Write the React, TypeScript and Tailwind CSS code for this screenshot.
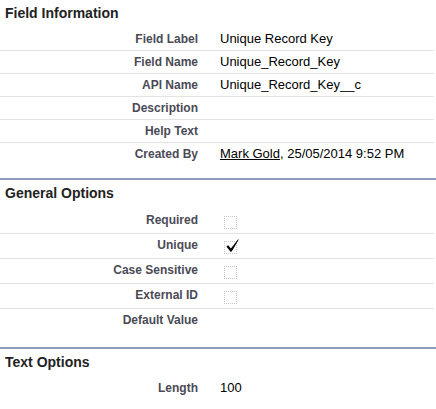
import React from "react";

const font = { fontFamily: '"Liberation Sans", Arial, sans-serif' };

function Row({
  label,
  children,
  border = true,
  tall = false,
}: {
  label: string;
  children?: React.ReactNode;
  border?: boolean;
  tall?: boolean;
}) {
  return (
    <div
      className={`flex mr-[2px] ${tall ? "h-[25px]" : "h-[23px]"} ${
        border ? "border-b border-[#e3e3e3]" : ""
      }`}
    >
      <div className="w-[198px] shrink-0 text-right text-[12px] font-bold text-[#4a4a56] leading-[22px]">
        {label}
      </div>
      <div className="pl-[22px] text-[13px] text-black leading-[22px]">
        {children}
      </div>
    </div>
  );
}

function Checkbox({ checked = false }: { checked?: boolean }) {
  return (
    <div className="relative ml-[4px] mt-[7px] w-[13px] h-[13px] border border-dotted border-[#c4c4c4]">
      {checked && (
        <svg
          className="absolute left-[1px] top-[-3px]"
          width="13"
          height="13"
          viewBox="0 0 13 13"
        >
          <path
            d="M0.4 7.4 L2.1 6.3 L4.9 9.4 L12.1 0.2 L12.7 0.7 L5.5 12.7 L4.5 12.7 Z"
            fill="#000"
          />
        </svg>
      )}
    </div>
  );
}

function Header({ title, tall = false }: { title: string; tall?: boolean }) {
  return (
    <div
      className={`${
        tall ? "h-[29px]" : "h-[28px]"
      } pt-[4px] pl-[5px] text-[14px] font-bold leading-[18px] text-[#222]`}
    >
      {title}
    </div>
  );
}

export default function App() {
  return (
    <div className="w-[436px] h-[409px] bg-white overflow-hidden" style={font}>
      <section className="mb-[12px]">
        <Header title="Field Information" />
        <Row label="Field Label">Unique Record Key</Row>
        <Row label="Field Name">Unique_Record_Key</Row>
        <Row label="API Name">Unique_Record_Key__c</Row>
        <Row label="Description"></Row>
        <Row label="Help Text"></Row>
        <Row label="Created By" border={false}>
          <span className="underline">Mark Gold</span>, 25/05/2014 9:52 PM
        </Row>
      </section>
      <section className="border-t-2 border-[#8e9dbe] mb-[15px]">
        <Header title="General Options" tall />
        <Row label="Required" tall>
          <Checkbox />
        </Row>
        <Row label="Unique" tall>
          <Checkbox checked />
        </Row>
        <Row label="Case Sensitive" tall>
          <Checkbox />
        </Row>
        <Row label="External ID" tall>
          <Checkbox />
        </Row>
        <Row label="Default Value" border={false}></Row>
      </section>
      <section className="border-t-2 border-[#8e9dbe]">
        <Header title="Text Options" />
        <Row label="Length" border={false}>
          100
        </Row>
      </section>
    </div>
  );
}
